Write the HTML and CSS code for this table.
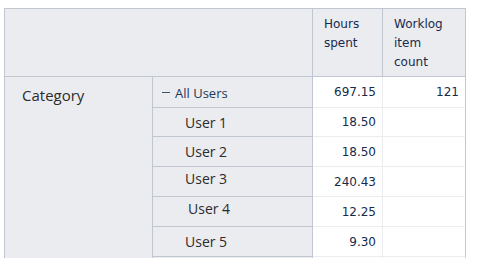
FILE: index.html
```html
<!DOCTYPE html>
<html lang="en">
<head>
<meta charset="utf-8">
<title>Worklog report</title>
<link rel="stylesheet" href="styles.css">
</head>
<body>
<div class="report">
  <div class="cell head-blank"></div>
  <div class="cell head">Hours spent</div>
  <div class="cell head last">Worklog item count</div>

  <div class="cell category">Category</div>

  <div class="cell member total"><span class="collapse"></span>All Users</div>
  <div class="cell num">697.15</div>
  <div class="cell num last">121</div>

  <div class="cell member">User 1</div>
  <div class="cell num">18.50</div>
  <div class="cell num last"></div>

  <div class="cell member">User 2</div>
  <div class="cell num">18.50</div>
  <div class="cell num last"></div>

  <div class="cell member raised">User 3</div>
  <div class="cell num">240.43</div>
  <div class="cell num last"></div>

  <div class="cell member raised shifted">User 4</div>
  <div class="cell num">12.25</div>
  <div class="cell num last"></div>

  <div class="cell member">User 5</div>
  <div class="cell num">9.30</div>
  <div class="cell num last"></div>

  <div class="cell member"></div>
  <div class="cell num"></div>
  <div class="cell num last"></div>
</div>
</body>
</html>
```

FILE: styles.css
```css
html, body {
  background: #ffffff;
}

body {
  margin: 8px 0 0 4px;
}

.report {
  display: grid;
  grid-template-columns: 148px 160px 70px 83px;
  grid-template-rows: 68px 31px 29px 30px 30px 30px 30px 30px;
  width: 462px;
  box-sizing: border-box;
  border-top: 1px solid #c1c7d0;
  border-left: 1px solid #c1c7d0;
}

.cell {
  box-sizing: border-box;
  border-right: 1px solid #c1c7d0;
  border-bottom: 1px solid #c1c7d0;
  display: flex;
  align-items: center;
  min-width: 0;
}

.head-blank {
  grid-column: 1 / span 2;
  background: #ebecf0;
}

.head {
  background: #ebecf0;
  align-items: flex-start;
  padding: 6px 12px 0 11px;
  font-family: "DejaVu Sans", sans-serif;
  font-size: 12px;
  line-height: 19px;
  color: #172b4d;
}

.category {
  grid-column: 1;
  grid-row: 2 / span 7;
  background: #ebecf0;
  align-items: flex-start;
  padding: 8px 0 0 17px;
  font-family: "Open Sans", sans-serif;
  font-size: 15px;
  line-height: 20px;
  color: #2b2b2b;
  border-bottom: none;
}

.member {
  grid-column: 2;
  background: #ebecf0;
  padding-left: 32px;
  font-family: "Open Sans", sans-serif;
  font-size: 14px;
  color: #2b2b2b;
}

.member.raised {
  padding-bottom: 7px;
}

.member.shifted {
  padding-left: 35px;
}

.member.total {
  padding-left: 9px;
  padding-top: 2px;
  font-size: 13px;
  color: #253858;
}

.collapse {
  display: inline-block;
  width: 8px;
  height: 1px;
  background: #42526e;
  margin-right: 5px;
  position: relative;
  top: -1px;
}

.num {
  background: #ffffff;
  justify-content: flex-end;
  padding-right: 6px;
  font-family: "DejaVu Sans", sans-serif;
  font-size: 12px;
  color: #172b4d;
  border-right-color: #ebecf0;
  border-bottom-color: #ebecf0;
}

.num.last {
  border-right-color: #c1c7d0;
}

.head.last {
  border-right-color: #c1c7d0;
}
```
